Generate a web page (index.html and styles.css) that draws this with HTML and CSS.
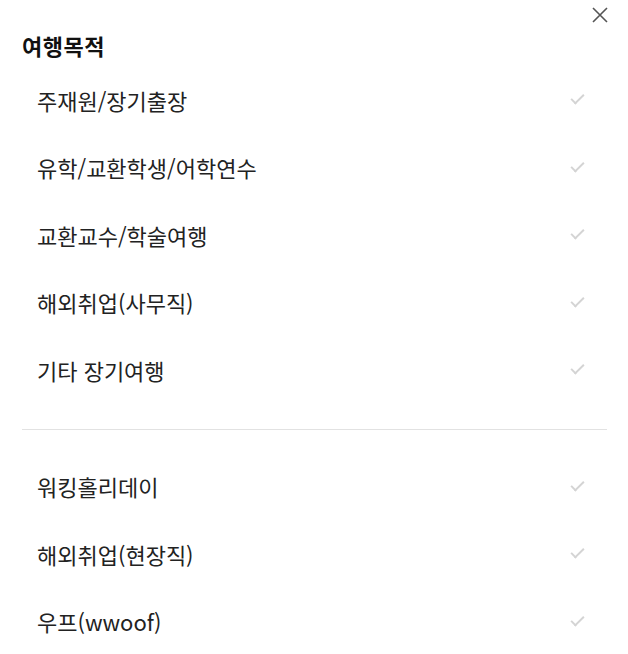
FILE: index.html
```html
<!DOCTYPE html>
<html lang="ko">
<head>
    <meta charset="UTF-8">
    <meta name="viewport" content="width=device-width, initial-scale=1.0">
    <title>여행목적</title>
    <link rel="stylesheet" href="styles.css">
</head>
<body>
    <div class="sheet">
        <div class="sheet-top">
            <button class="close" type="button" aria-label="닫기">
                <svg width="18" height="18" viewBox="0 0 18 18"><path d="M2 2L16 16M16 2L2 16" stroke="#555" stroke-width="1.6" fill="none"/></svg>
            </button>
        </div>
        <h2 class="title">여행목적</h2>
        <ul class="opt-list">
            <li class="opt"><span>주재원/장기출장</span><i class="chk"></i></li>
            <li class="opt"><span>유학/교환학생/어학연수</span><i class="chk"></i></li>
            <li class="opt"><span>교환교수/학술여행</span><i class="chk"></i></li>
            <li class="opt"><span>해외취업(사무직)</span><i class="chk"></i></li>
            <li class="opt"><span>기타 장기여행</span><i class="chk"></i></li>
        </ul>
        <hr class="divider">
        <ul class="opt-list">
            <li class="opt"><span>워킹홀리데이</span><i class="chk"></i></li>
            <li class="opt"><span>해외취업(현장직)</span><i class="chk"></i></li>
            <li class="opt"><span>우프(wwoof)</span><i class="chk"></i></li>
        </ul>
    </div>
</body>
</html>
```

FILE: styles.css
```css
*{
    margin: 0;
    padding: 0;
    box-sizing: border-box;
}
body{
    background: #fff;
    font-family: "Noto Sans CJK KR", "Noto Sans", sans-serif;
    color: #222;
}
.sheet{
    padding: 0 21px 0 22px;
}
.sheet-top{
    display: flex;
    justify-content: flex-end;
    height: 28px;
    padding-top: 6px;
}
.close{
    border: 0;
    background: none;
    width: 18px;
    height: 18px;
    margin-right: -2px;
}
.title{
    font-size: 22px;
    font-weight: 700;
    line-height: 34px;
    color: #111;
    letter-spacing: 0.5px;
}
.opt-list{
    list-style: none;
    padding-top: 4px;
}
.opt{
    display: flex;
    align-items: center;
    justify-content: space-between;
    height: 67.5px;
    padding: 0 23px 0 15px;
    font-size: 22px;
}
/* 체크 표시 */
.chk{
    width: 13px;
    height: 7px;
    border-left: 2px solid #d4d4d4;
    border-bottom: 2px solid #d4d4d4;
    transform: rotate(-45deg);
    margin-top: -4px;
}
.divider{
    border: 0;
    border-top: 1px solid #e2e2e2;
    margin: 25px 0 19px;
}
```
